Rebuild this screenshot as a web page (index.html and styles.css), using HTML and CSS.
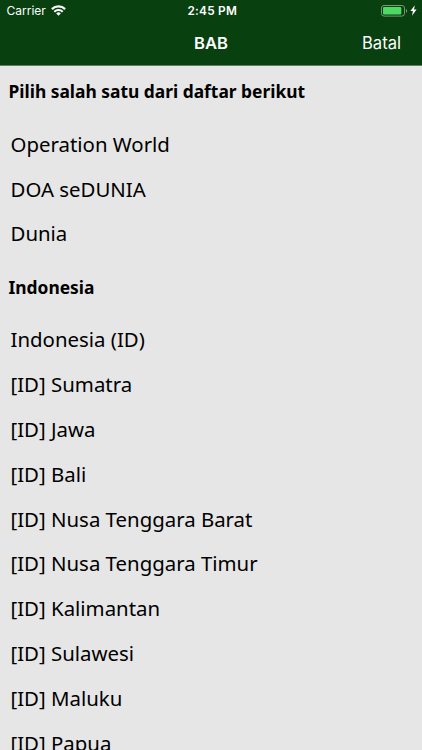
FILE: index.html
```html
<!DOCTYPE html>
<html lang="id">
<head>
    <meta charset="UTF-8">
    <meta name="viewport" content="width=device-width, initial-scale=1.0">
    <title>BAB</title>
    <link rel="stylesheet" href="styles.css">
</head>
<body>
    <header class="header">
        <div class="status-bar">
            <div class="carrier">
                <span>Carrier</span>
                <svg class="wifi" viewBox="0 0 15 11" width="15" height="11">
                    <path d="M0.9 4.1a9.4 9.4 0 0 1 13.2 0" fill="none" stroke="#fff" stroke-width="2.2"/>
                    <path d="M3.3 6.7a6 6 0 0 1 8.4 0" fill="none" stroke="#fff" stroke-width="2"/>
                    <path d="M7.5 10.8L5.2 8.5a3.2 3.2 0 0 1 4.6 0z" fill="#fff"/>
                </svg>
            </div>
            <div class="time">2:45 PM</div>
            <div class="power">
                <svg viewBox="0 0 27 12" width="27" height="12">
                    <rect x="0.5" y="0.5" width="23" height="10.6" rx="2.6" fill="none" stroke="#7b987e"/>
                    <rect x="2" y="2" width="18.3" height="7.6" rx="1.3" fill="#4cd964"/>
                    <path d="M25 4v3.8a2.1 2.1 0 0 0 0-3.8z" fill="#7b987e"/>
                </svg>
                <svg viewBox="0 0 7 11" width="7" height="11">
                    <path d="M4.8 0.3L0.4 6.1h2.5L2 10.7 6.6 4.6H4z" fill="#fff"/>
                </svg>
            </div>
        </div>
        <nav class="nav-bar">
            <h1 class="nav-title">BAB</h1>
            <button class="cancel-btn">Batal</button>
        </nav>
    </header>

    <main class="content">
        <h2 class="section-title">Pilih salah satu dari daftar berikut</h2>
        <ul class="list">
            <li>Operation World</li>
            <li>DOA seDUNIA</li>
            <li>Dunia</li>
        </ul>
        <h2 class="section-title">Indonesia</h2>
        <ul class="list">
            <li>Indonesia (ID)</li>
            <li>[ID] Sumatra</li>
            <li>[ID] Jawa</li>
            <li>[ID] Bali</li>
            <li>[ID] Nusa Tenggara Barat</li>
            <li>[ID] Nusa Tenggara Timur</li>
            <li>[ID] Kalimantan</li>
            <li>[ID] Sulawesi</li>
            <li>[ID] Maluku</li>
            <li>[ID] Papua</li>
        </ul>
    </main>
</body>
</html>
```
FILE: styles.css
```css
* {
    margin: 0;
    padding: 0;
    box-sizing: border-box;
}

body {
    height: 100vh;
    overflow: hidden;
    background-color: #e6e6e6;
    color: #000;
    font-family: 'Noto Sans', sans-serif;
}

.header {
    height: 66px;
    border-bottom: 1px solid #5c8060;
    background-color: #08400f;
    color: #fff;
    font-family: Inter, sans-serif;
}

.status-bar {
    display: grid;
    grid-template-columns: 1fr auto 1fr;
    align-items: center;
    height: 21px;
    padding: 0 5px 0 6.5px;
    font-size: 12px;
}

.carrier,
.power {
    display: flex;
    align-items: center;
}

.carrier {
    gap: 5px;
}

.power {
    justify-content: flex-end;
    gap: 2px;
}

.time {
    padding-left: 1px;
    font-size: 11.8px;
    font-weight: 600;
    letter-spacing: 0.25px;
}

.nav-bar {
    display: grid;
    grid-template-columns: 1fr auto 1fr;
    align-items: center;
    height: 44px;
    padding: 0 21px;
}

.nav-title {
    grid-column: 2;
    font-size: 16.6px;
    font-weight: 600;
}

.cancel-btn {
    justify-self: end;
    border: none;
    background: none;
    color: #fff;
    font-family: inherit;
    font-size: 16.6px;
}

.section-title {
    height: 55.8px;
    padding: 0 8.5px;
    font-size: 17.4px;
    font-weight: bold;
    line-height: 51px;
}

.list {
    list-style: none;
    margin-bottom: 5.4px;
}

.list li {
    height: 44.8px;
    padding: 0 10.5px;
    font-size: 20.4px;
    line-height: 45px;
    white-space: nowrap;
}
```
